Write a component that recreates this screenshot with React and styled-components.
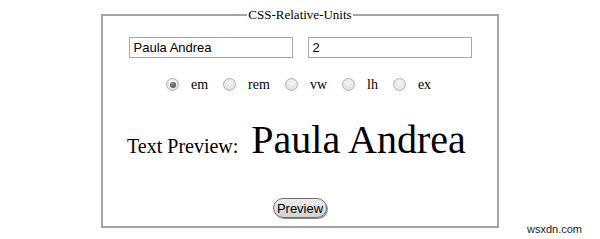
import React, { useState } from "react";
import styled, { createGlobalStyle } from "styled-components";

const Global = createGlobalStyle`
  html, body { margin: 0; padding: 0; background: #fff; }
  body { width: 600px; height: 239px; overflow: hidden; font-family: "Liberation Serif", "Times New Roman", serif; color: #000; }
`;

const Page = styled.div`
  position: relative;
  width: 600px;
  height: 239px;
  padding-top: 7px;
  box-sizing: border-box;
`;

const Frame = styled.fieldset`
  width: 398px;
  box-sizing: border-box;
  margin: 0 0 0 101px;
  padding: 15px 0 8px;
  border: 2px solid #a3a3a3;
  display: flex;
  flex-direction: column;
  align-items: center;
`;

const Legend = styled.legend`
  margin: 0 auto;
  padding: 0 1px;
  font-size: 13px;
  line-height: 15px;
  font-family: "Liberation Serif", "Times New Roman", serif;
`;

const InputRow = styled.div`
  display: flex;
  gap: 15px;
`;

const TextInput = styled.input`
  width: 164px;
  height: 21px;
  box-sizing: border-box;
  border: 1px solid #a9a9a9;
  padding: 1px 4px;
  font-family: "Liberation Sans", Arial, sans-serif;
  font-size: 13px;
  color: #000;
  outline: none;
`;

const RadioRow = styled.div`
  align-self: flex-start;
  display: flex;
  align-items: center;
  height: 17px;
  margin-top: 18px;
  margin-left: 63px;
`;

const Option = styled.label`
  display: flex;
  align-items: center;
  gap: 12px;
  margin-right: 15px;
  font-size: 14px;
  &:last-child { margin-right: 0; }
`;

const Radio = styled.input`
  appearance: none;
  margin: 0;
  width: 13px;
  height: 13px;
  border-radius: 50%;
  border: 1px solid #b0b0b0;
  box-sizing: border-box;
  background: radial-gradient(circle at 50% 35%, #f4f4f4 0%, #dcdcdc 100%);
  position: relative;
  &:checked::after {
    content: "";
    position: absolute;
    left: 2.5px;
    top: 2.5px;
    width: 6px;
    height: 6px;
    border-radius: 50%;
    background: radial-gradient(circle at 40% 35%, #888 0%, #444 100%);
  }
`;

const PreviewRow = styled.div`
  align-self: flex-start;
  display: flex;
  align-items: baseline;
  gap: 13px;
  margin-top: 24px;
  margin-left: 24px;
`;

const Caption = styled.span`
  font-size: 20px;
`;

const Sample = styled.span`
  font-size: ${(p) => p.$size};
  line-height: 46px;
`;

const Button = styled.button`
  margin-top: 35px;
  height: 20px;
  padding: 0 3px;
  border: 1px solid #707070;
  border-radius: 10px;
  background: linear-gradient(#ececec, #d2d2d2);
  font-family: "Liberation Sans", Arial, sans-serif;
  font-size: 13px;
  color: #000;
  box-shadow: 1px 1px 0 #8a8a8a;
  cursor: pointer;
`;

const Watermark = styled.div`
  position: absolute;
  left: 527px;
  top: 223px;
  font-family: "Liberation Sans", Arial, sans-serif;
  font-size: 11px;
  color: #222;
`;

const units = ["em", "rem", "vw", "lh", "ex"];

export default function App() {
  const [name, setName] = useState("Paula Andrea");
  const [value, setValue] = useState("2");
  const [unit, setUnit] = useState("em");
  return (
    <Page>
      <Global />
      <Frame>
        <Legend>CSS-Relative-Units</Legend>
        <InputRow>
          <TextInput value={name} onChange={(e) => setName(e.target.value)} />
          <TextInput value={value} onChange={(e) => setValue(e.target.value)} />
        </InputRow>
        <RadioRow>
          {units.map((u) => (
            <Option key={u}>
              <Radio
                type="radio"
                name="unit"
                checked={unit === u}
                onChange={() => setUnit(u)}
              />
              {u}
            </Option>
          ))}
        </RadioRow>
        <PreviewRow>
          <Caption>Text Preview:</Caption>
          <Sample $size="40px">{name}</Sample>
        </PreviewRow>
        <Button type="button">Preview</Button>
      </Frame>
      <Watermark>wsxdn.com</Watermark>
    </Page>
  );
}
